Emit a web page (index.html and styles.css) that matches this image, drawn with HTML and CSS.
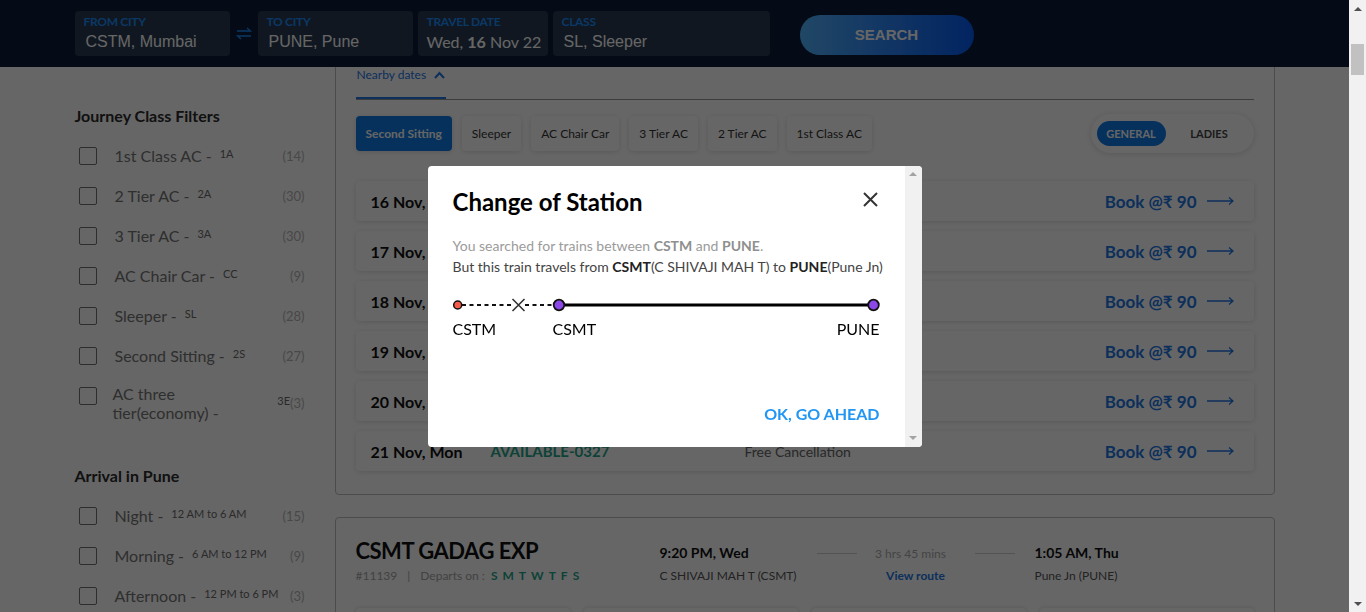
FILE: index.html
```html
<!DOCTYPE html>
<html lang="en">
<head>
<meta charset="utf-8">
<title>CSTM to PUNE trains</title>
<link rel="stylesheet" href="styles.css">
</head>
<body>
<header class="topbar">
  <div class="topbar-inner">
    <div class="field field-from">
      <span class="field-label">FROM CITY</span>
      <span class="field-value">CSTM, Mumbai</span>
    </div>
    <span class="swap" aria-label="Swap cities">
      <svg width="16" height="13" viewBox="0 0 16 13"><path d="M1 4H14.5L11 1M15 9H1.5L5 12" fill="none" stroke="currentColor" stroke-width="1.3"/></svg>
    </span>
    <div class="field field-to">
      <span class="field-label">TO CITY</span>
      <span class="field-value">PUNE, Pune</span>
    </div>
    <div class="field field-date">
      <span class="field-label">TRAVEL DATE</span>
      <span class="field-value">Wed, <b>16</b> Nov 22</span>
    </div>
    <div class="field field-class">
      <span class="field-label">CLASS</span>
      <span class="field-value">SL, Sleeper</span>
    </div>
    <button class="search-btn" type="button">SEARCH</button>
  </div>
</header>

<div class="layout">
  <aside class="filters">
    <section class="filter-group">
      <h3 class="filter-title">Journey Class Filters</h3>
      <ul class="filter-list">
        <li class="filter-row"><span class="checkbox"></span><span class="filter-name">1st Class AC -</span><span class="filter-code">1A</span><span class="filter-count">(14)</span></li>
        <li class="filter-row"><span class="checkbox"></span><span class="filter-name">2 Tier AC -</span><span class="filter-code">2A</span><span class="filter-count">(30)</span></li>
        <li class="filter-row"><span class="checkbox"></span><span class="filter-name">3 Tier AC -</span><span class="filter-code">3A</span><span class="filter-count">(30)</span></li>
        <li class="filter-row"><span class="checkbox"></span><span class="filter-name">AC Chair Car -</span><span class="filter-code">CC</span><span class="filter-count">(9)</span></li>
        <li class="filter-row"><span class="checkbox"></span><span class="filter-name">Sleeper -</span><span class="filter-code">SL</span><span class="filter-count">(28)</span></li>
        <li class="filter-row"><span class="checkbox"></span><span class="filter-name">Second Sitting -</span><span class="filter-code">2S</span><span class="filter-count">(27)</span></li>
        <li class="filter-row filter-row-wrap"><span class="checkbox"></span><span class="filter-name">AC three tier(economy) -</span><span class="filter-code">3E</span><span class="filter-count">(3)</span></li>
      </ul>
    </section>
    <section class="filter-group">
      <h3 class="filter-title">Arrival in Pune</h3>
      <ul class="filter-list">
        <li class="filter-row"><span class="checkbox"></span><span class="filter-name">Night -</span><span class="filter-code">12 AM to 6 AM</span><span class="filter-count">(15)</span></li>
        <li class="filter-row"><span class="checkbox"></span><span class="filter-name">Morning -</span><span class="filter-code">6 AM to 12 PM</span><span class="filter-count">(9)</span></li>
        <li class="filter-row"><span class="checkbox"></span><span class="filter-name">Afternoon -</span><span class="filter-code">12 PM to 6 PM</span><span class="filter-count">(3)</span></li>
      </ul>
    </section>
  </aside>

  <main class="results">
    <article class="card dates-card">
      <nav class="tabs">
        <span class="tab">Nearby dates
          <svg width="11" height="8" viewBox="0 0 11 8"><path d="M1 7L5.5 2L10 7" fill="none" stroke="currentColor" stroke-width="2"/></svg>
        </span>
      </nav>
      <div class="class-bar">
        <div class="chips">
          <span class="chip active">Second Sitting</span>
          <span class="chip">Sleeper</span>
          <span class="chip">AC Chair Car</span>
          <span class="chip">3 Tier AC</span>
          <span class="chip">2 Tier AC</span>
          <span class="chip">1st Class AC</span>
        </div>
        <div class="quota">
          <span class="quota-opt active">GENERAL</span>
          <span class="quota-opt">LADIES</span>
        </div>
      </div>
      <ul class="dates">
        <li class="date-row"><span class="date">16 Nov, Wed</span><span class="avail">AVAILABLE-0341</span><span class="cancel">Free Cancellation</span><span class="book">Book @₹ 90 <svg width="27" height="10" viewBox="0 0 27 10"><path d="M0 5H26M22 1.5L26 5L22 8.5" fill="none" stroke="currentColor" stroke-width="1.3"/></svg></span></li>
        <li class="date-row"><span class="date">17 Nov, Thu</span><span class="avail">AVAILABLE-0336</span><span class="cancel">Free Cancellation</span><span class="book">Book @₹ 90 <svg width="27" height="10" viewBox="0 0 27 10"><path d="M0 5H26M22 1.5L26 5L22 8.5" fill="none" stroke="currentColor" stroke-width="1.3"/></svg></span></li>
        <li class="date-row"><span class="date">18 Nov, Fri</span><span class="avail">AVAILABLE-0334</span><span class="cancel">Free Cancellation</span><span class="book">Book @₹ 90 <svg width="27" height="10" viewBox="0 0 27 10"><path d="M0 5H26M22 1.5L26 5L22 8.5" fill="none" stroke="currentColor" stroke-width="1.3"/></svg></span></li>
        <li class="date-row"><span class="date">19 Nov, Sat</span><span class="avail">AVAILABLE-0330</span><span class="cancel">Free Cancellation</span><span class="book">Book @₹ 90 <svg width="27" height="10" viewBox="0 0 27 10"><path d="M0 5H26M22 1.5L26 5L22 8.5" fill="none" stroke="currentColor" stroke-width="1.3"/></svg></span></li>
        <li class="date-row"><span class="date">20 Nov, Sun</span><span class="avail">AVAILABLE-0329</span><span class="cancel">Free Cancellation</span><span class="book">Book @₹ 90 <svg width="27" height="10" viewBox="0 0 27 10"><path d="M0 5H26M22 1.5L26 5L22 8.5" fill="none" stroke="currentColor" stroke-width="1.3"/></svg></span></li>
        <li class="date-row"><span class="date">21 Nov, Mon</span><span class="avail">AVAILABLE-0327</span><span class="cancel">Free Cancellation</span><span class="book">Book @₹ 90 <svg width="27" height="10" viewBox="0 0 27 10"><path d="M0 5H26M22 1.5L26 5L22 8.5" fill="none" stroke="currentColor" stroke-width="1.3"/></svg></span></li>
      </ul>
    </article>

    <article class="card train-card">
      <div class="train-head">
        <div class="train-id">
          <h2 class="train-name">CSMT GADAG EXP</h2>
          <div class="train-meta">
            <span>#11139</span><span class="sep">|</span><span>Departs on :</span>
            <span class="days"><b>S</b><b>M</b><b>T</b><b>W</b><b>T</b><b>F</b><b>S</b></span>
          </div>
        </div>
        <div class="stop stop-dep">
          <span class="stop-time">9:20 PM, Wed</span>
          <span class="stop-name">C SHIVAJI MAH T (CSMT)</span>
        </div>
        <div class="duration">
          <div class="duration-line"><span class="rule"></span><span class="dur-text">3 hrs 45 mins</span><span class="rule"></span></div>
          <a class="view-route">View route</a>
        </div>
        <div class="stop stop-arr">
          <span class="stop-time">1:05 AM, Thu</span>
          <span class="stop-name">Pune Jn (PUNE)</span>
        </div>
      </div>
      <div class="class-boxes">
        <div class="class-box">Sleeper (SL)</div>
        <div class="class-box">AC 3 Tier (3A)</div>
        <div class="class-box">AC 2 Tier (2A)</div>
        <div class="class-box">First AC (1A)</div>
      </div>
    </article>
  </main>
</div>

<div class="overlay">
  <div class="modal" role="dialog" aria-label="Change of Station">
    <div class="modal-body">
      <div class="modal-head">
        <h2 class="modal-title">Change of Station</h2>
        <button class="modal-close" type="button" aria-label="Close">
          <svg width="15" height="15" viewBox="0 0 15 15"><path d="M1 1L14 14M14 1L1 14" fill="none" stroke="currentColor" stroke-width="2"/></svg>
        </button>
      </div>
      <p class="modal-text muted">You searched for trains between <strong>CSTM</strong> and <strong>PUNE</strong>.</p>
      <p class="modal-text">But this train travels from <strong>CSMT</strong>(C SHIVAJI MAH T) to <strong>PUNE</strong>(Pune Jn)</p>
      <svg class="route" width="427" height="14" viewBox="0 0 427 14">
        <path d="M9 7H59M72 7H101" stroke="#111" stroke-width="1.8" stroke-dasharray="4 3.5" fill="none"/>
        <path d="M59.5 1L71.5 13M71.5 1L59.5 13" stroke="#333" stroke-width="1.6" fill="none"/>
        <path d="M112 7H415" stroke="#000" stroke-width="3" fill="none"/>
        <circle cx="4.7" cy="7" r="4" fill="#f55b4b" stroke="#111" stroke-width="1.5"/>
        <circle cx="106" cy="7" r="5.3" fill="#8c47e8" stroke="#111" stroke-width="1.8"/>
        <circle cx="420.5" cy="7" r="5.3" fill="#8c47e8" stroke="#111" stroke-width="1.8"/>
      </svg>
      <div class="route-labels"><span>CSTM</span><span>CSMT</span><span>PUNE</span></div>
      <div class="modal-actions"><button class="modal-ok" type="button">OK, GO AHEAD</button></div>
    </div>
    <div class="scrollbar scrollbar-disabled" aria-hidden="true">
      <span class="sb-arrow sb-up"></span>
      <span class="sb-arrow sb-down"></span>
    </div>
  </div>
</div>

<div class="scrollbar page-scrollbar" aria-hidden="true">
  <span class="sb-arrow sb-up"></span>
  <span class="sb-thumb"></span>
  <span class="sb-arrow sb-down"></span>
</div>
</body>
</html>
```
FILE: styles.css
```css
* { box-sizing: border-box; }
html, body { margin: 0; }
body { font-family: Lato, "Noto Sans", sans-serif; color: #333; background: #fff; padding-right: 17px; }
button { font: inherit; border: 0; background: none; padding: 0; cursor: pointer; }
ul { list-style: none; margin: 0; padding: 0; }
h2, h3, p { margin: 0; }

/* header */
.topbar { position: fixed; top: 0; left: 0; right: 17px; height: 67px; background: #0a1c37; z-index: 10; }
.topbar-inner { max-width: 1200px; height: 100%; margin: 0 auto; display: flex; align-items: center; }
.field { flex: none; height: 45px; border-radius: 4px; background: #283b52; padding: 4px 9px 0; display: flex; flex-direction: column; }
.field-from, .field-to { width: 155px; }
.field-date { width: 130px; margin-left: 5px; }
.field-class { width: 217px; margin-left: 5px; }
.field-label { font: 700 12px/13px Lato, sans-serif; color: #1b8cf9; letter-spacing: -0.3px; }
.field-value { margin-top: 3px; padding-left: 2px; font: 16px/22px "Liberation Sans", Arial, sans-serif; color: #fff; white-space: nowrap; }
.field-date .field-value { font: 16px/22px Lato, sans-serif; padding-left: 0; }
.swap { flex: none; width: 28px; display: flex; justify-content: center; color: #1b8cf9; }
.search-btn { flex: none; margin: 2px 0 0 30px; width: 174px; height: 40px; border-radius: 20px; background: linear-gradient(to right, #53b2fe, #065af3); color: #fff; font: 700 15px "Liberation Sans", Arial, sans-serif; }

/* layout */
.layout { max-width: 1200px; margin: 0 auto; padding-top: 60px; display: flex; gap: 30px; align-items: flex-start; }
.filters { flex: none; width: 230px; padding-top: 46px; }
.results { flex: 1; min-width: 0; display: flex; flex-direction: column; gap: 22px; }

/* filters */
.filter-group + .filter-group { margin-top: 44px; }
.filter-title { font: 700 16px/20px Lato, sans-serif; color: #2b2b2b; margin-bottom: 20px; }
.filter-list { display: flex; flex-direction: column; gap: 20px; }
.filter-row { display: flex; align-items: center; font: 16px/20px Lato, sans-serif; color: #757575; }
.filter-row-wrap { line-height: 19px; margin-top: -2px; }
.filter-row-wrap .filter-name { margin-left: -2px; }
.checkbox { flex: none; align-self: flex-start; width: 18px; height: 18px; margin: 1px 18px 0 4px; border: 1px solid #717171; border-radius: 2px; }
.filter-row-wrap .checkbox { margin-top: 3px; }
.filter-name { flex: 0 1 auto; min-width: 0; }
.filter-code { flex: none; margin-left: 8px; font-size: 11px; line-height: 14px; color: #6a6a6a; position: relative; top: -2px; white-space: nowrap; }
.filter-count { flex: none; margin-left: auto; font-size: 13px; color: #b5b5b5; }

/* cards */
.card { background: #fff; border: 1px solid #bfbfbf; border-radius: 4px; }
.dates-card { padding: 6px 20px 23px; }
.tabs { display: flex; border-bottom: 1px solid #969696; }
.tab { display: flex; align-items: center; gap: 8px; font: 12px/16px Lato, sans-serif; color: #2276e3; padding: 0 0 14px 1px; border-bottom: 2px solid #2276e3; width: 90px; }
.class-bar { margin-top: 14px; display: flex; justify-content: space-between; align-items: center; }
.chips { display: flex; gap: 10px; }
.chip { height: 35px; padding: 0 10px; display: flex; align-items: center; font: 12px Lato, sans-serif; color: #333; background: #fff; border-radius: 4px; box-shadow: 0 1px 5px rgba(0,0,0,0.13); }
.chip.active { background: #0f7be6; color: #fff; font-weight: 700; }
.quota { height: 39px; padding: 0 1px 0 6px; display: flex; align-items: center; border-radius: 20px; background: #fff; box-shadow: 0 1px 6px rgba(0,0,0,0.14); }
.quota-opt { height: 25px; width: 87px; display: flex; align-items: center; justify-content: center; font: 700 11px Lato, sans-serif; color: #444; }
.quota-opt.active { width: 69px; border-radius: 13px; background: #0f7be6; color: #fff; }

.dates { margin-top: 28px; display: flex; flex-direction: column; gap: 10px; }
.date-row { height: 40px; display: grid; grid-template-columns: 120px 254px 1fr auto; align-items: center; padding: 0 20px 0 15px; background: #fff; border-radius: 4px; box-shadow: 0 1px 5px rgba(0,0,0,0.13); }
.date { font: 700 16px Lato, sans-serif; color: #111; }
.avail { font: 700 15px Lato, sans-serif; color: #1fa68a; }
.cancel { font: 14px Lato, sans-serif; color: #666; }
.book { display: flex; align-items: center; gap: 10px; font: 700 17px Lato, sans-serif; color: #2276e3; }

/* train card */
.train-card { padding: 20px 20px 20px; }
.train-head { display: flex; align-items: flex-start; }
.train-id { width: 304px; flex: none; }
.train-name { font: 700 22px/26px Lato, sans-serif; color: #111; letter-spacing: -0.5px; margin-bottom: 4px; }
.train-meta { display: flex; align-items: center; font: 12px/16px Lato, sans-serif; color: #a5a5a5; }
.sep { margin: 0 10px; }
.days { display: flex; gap: 5px; margin-left: 6px; color: #1fa68a; }
.stop { display: flex; flex-direction: column; flex: none; }
.stop-dep { width: 157px; }
.stop-arr { margin-left: 20px; }
.stop-time { font: 700 14px/30px Lato, sans-serif; color: #111; }
.stop-name { font: 12px/16px Lato, sans-serif; color: #555; }
.duration { width: 198px; flex: none; display: flex; flex-direction: column; align-items: center; }
.duration-line { width: 100%; height: 30px; display: flex; align-items: center; justify-content: space-between; }
.rule { width: 40px; height: 1px; background: #cfcfcf; }
.dur-text { font: 12px Lato, sans-serif; color: #ababab; margin-right: 10px; }
.view-route { font: 700 12px/16px Lato, sans-serif; color: #2276e3; }
.class-boxes { margin-top: 24px; display: grid; grid-template-columns: repeat(4, 1fr); gap: 14px; }
.class-box { height: 90px; padding: 24px 14px; border-radius: 4px; background: #fff; box-shadow: 0 0 4px rgba(0,0,0,0.16); font: 13px Lato, sans-serif; }

/* modal */
.overlay { position: fixed; top: 0; left: 0; bottom: 0; right: 17px; z-index: 20; background: rgba(0,0,0,0.6); display: flex; align-items: center; justify-content: center; }
.modal { width: 494px; height: 281px; display: flex; overflow: hidden; background: #fff; border-radius: 4px; }
.modal-body { flex: 1; min-width: 0; padding: 21px 25px 22px; }
.modal-head { display: flex; justify-content: space-between; align-items: center; height: 30px; }
.modal-title { font: 700 24px/30px Lato, sans-serif; color: #000; }
.modal-close { color: #333; width: 15px; height: 15px; margin: -4px 2px 0 0; display: flex; }
.modal-text { font: 14px/21px Lato, sans-serif; color: #444; white-space: nowrap; }
.modal-text strong { color: #222; }
.modal-text.muted { margin-top: 18px; color: #9b9b9b; }
.modal-text.muted strong { color: #8f8f8f; }
.route { display: block; margin-top: 21px; }
.route-labels { margin-top: 7px; display: grid; grid-template-columns: 100px 1fr auto; font: 16px/20px Lato, sans-serif; color: #000; }
.modal-actions { margin-top: 65px; display: flex; justify-content: flex-end; }
.modal-ok { font: 700 16px/20px Lato, sans-serif; color: #2196f3; }

/* scrollbars */
.scrollbar { width: 17px; flex: none; background: #f1f1f1; display: flex; flex-direction: column; justify-content: space-between; }
.page-scrollbar { position: fixed; top: 0; right: 0; bottom: 0; z-index: 30; }
.sb-arrow { width: 17px; height: 17px; display: flex; align-items: center; justify-content: center; }
.sb-arrow::before { content: ""; border-left: 4px solid transparent; border-right: 4px solid transparent; }
.sb-up::before { border-bottom: 4px solid #505050; }
.sb-down::before { border-top: 4px solid #505050; }
.scrollbar-disabled .sb-up::before { border-bottom-color: #a3a3a3; }
.scrollbar-disabled .sb-down::before { border-top-color: #a3a3a3; }
.sb-thumb { height: 31px; margin: 27px 2px auto; background: #c1c1c1; }
```
